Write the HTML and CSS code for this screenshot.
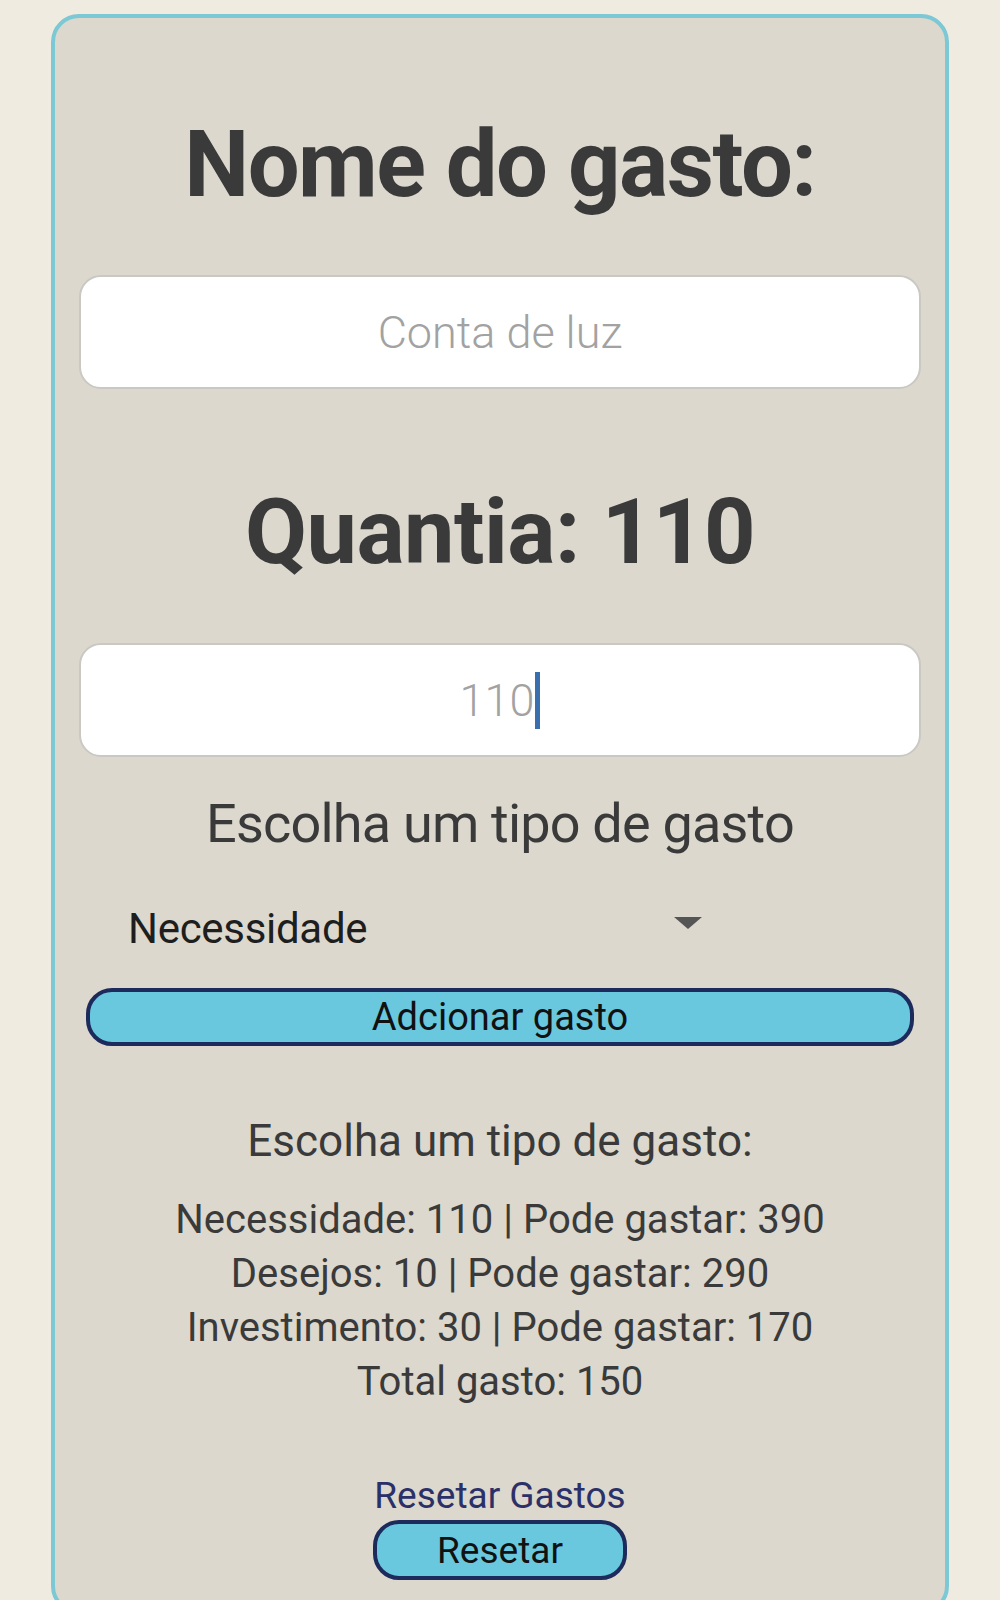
FILE: index.html
```html
<!DOCTYPE html>
<html lang="pt">
<head>
<meta charset="utf-8">
<title>Gastos</title>
<link rel="stylesheet" href="styles.css">
</head>
<body>
<main class="card">
  <h1 class="title title-name">Nome do gasto:</h1>
  <div class="field field-name"><span class="placeholder">Conta de luz</span></div>
  <h1 class="title title-amount">Quantia: 110</h1>
  <div class="field field-amount"><span class="value">110</span><span class="caret"></span></div>
  <p class="choose">Escolha um tipo de gasto</p>
  <div class="select">
    <span class="select-text">Necessidade</span>
    <svg class="select-arrow" width="28" height="12" viewBox="0 0 28 12"><path d="M0 0 L28 0 L14 12 Z" fill="#555"/></svg>
  </div>
  <button class="btn btn-add">Adcionar gasto</button>
  <p class="summary-title">Escolha um tipo de gasto:</p>
  <div class="stats">
    <p>Necessidade: 110 | Pode gastar: 390</p>
    <p>Desejos: 10 | Pode gastar: 290</p>
    <p>Investimento: 30 | Pode gastar: 170</p>
    <p>Total gasto: 150</p>
  </div>
  <p class="reset-label">Resetar Gastos</p>
  <button class="btn btn-reset">Resetar</button>
</main>
</body>
</html>
```
FILE: styles.css
```css
html, body {
  margin: 0;
  padding: 0;
}
body {
  background: #efebe1;
  font-family: Roboto, "Noto Sans", sans-serif;
  color: #3a3a3a;
  padding: 14px 51px 0;
}
.card {
  box-sizing: border-box;
  background: #dcd8ce;
  border: 4px solid #7cc8d4;
  border-radius: 28px;
  padding: 0 24px 20px;
  display: flex;
  flex-direction: column;
  align-items: center;
  min-height: 1600px;
}
.title {
  margin: 0;
  font-weight: 700;
  color: #3a3a3a;
  line-height: 1.2;
  text-align: center;
}
.title-name {
  font-size: 92px;
  letter-spacing: -1.5px;
  margin-top: 92px;
}
.title-amount {
  font-size: 90px;
  letter-spacing: -0.5px;
  margin-top: 90px;
}
.field {
  box-sizing: border-box;
  width: 100%;
  height: 114px;
  background: #fff;
  border: 2px solid #cac8c3;
  border-radius: 22px;
  display: flex;
  align-items: center;
  justify-content: center;
  font-size: 45px;
  font-weight: 300;
}
.field-name {
  margin-top: 55px;
}
.field-amount {
  margin-top: 56px;
}
.placeholder, .value {
  color: #a2a2a2;
}
.caret {
  width: 5px;
  height: 57px;
  background: #3a6faf;
  margin-left: 1px;
}
.choose {
  margin: 33px 0 0;
  font-size: 54px;
  letter-spacing: -0.8px;
  line-height: 67px;
  color: #3a3a3a;
}
.select {
  align-self: flex-start;
  margin-left: 49px;
  margin-top: 44px;
  width: 574px;
  display: flex;
  align-items: center;
  justify-content: space-between;
  font-size: 42px;
  letter-spacing: -0.3px;
  line-height: 56px;
  color: #1e1e1e;
}
.select-arrow {
  margin-top: -12px;
}
.btn {
  box-sizing: border-box;
  font-family: Roboto, "Noto Sans", sans-serif;
  background: #6ac8de;
  border: 4px solid #1c2a5c;
  color: #111;
  padding: 0;
  font-size: 38px;
}
.btn-add {
  margin-top: 31px;
  width: 828px;
  height: 58px;
  border-radius: 26px;
}
.summary-title {
  margin: 66px 0 0;
  font-size: 44px;
  line-height: 58px;
}
.stats {
  margin-top: 23px;
  text-align: center;
}
.stats p {
  margin: 0;
  font-size: 40px;
  line-height: 54px;
}
.reset-label {
  margin: 63px 0 0;
  font-size: 37px;
  line-height: 48px;
  color: #2b3168;
}
.btn-reset {
  width: 254px;
  height: 60px;
  border-radius: 26px;
  font-size: 37px;
}
```
